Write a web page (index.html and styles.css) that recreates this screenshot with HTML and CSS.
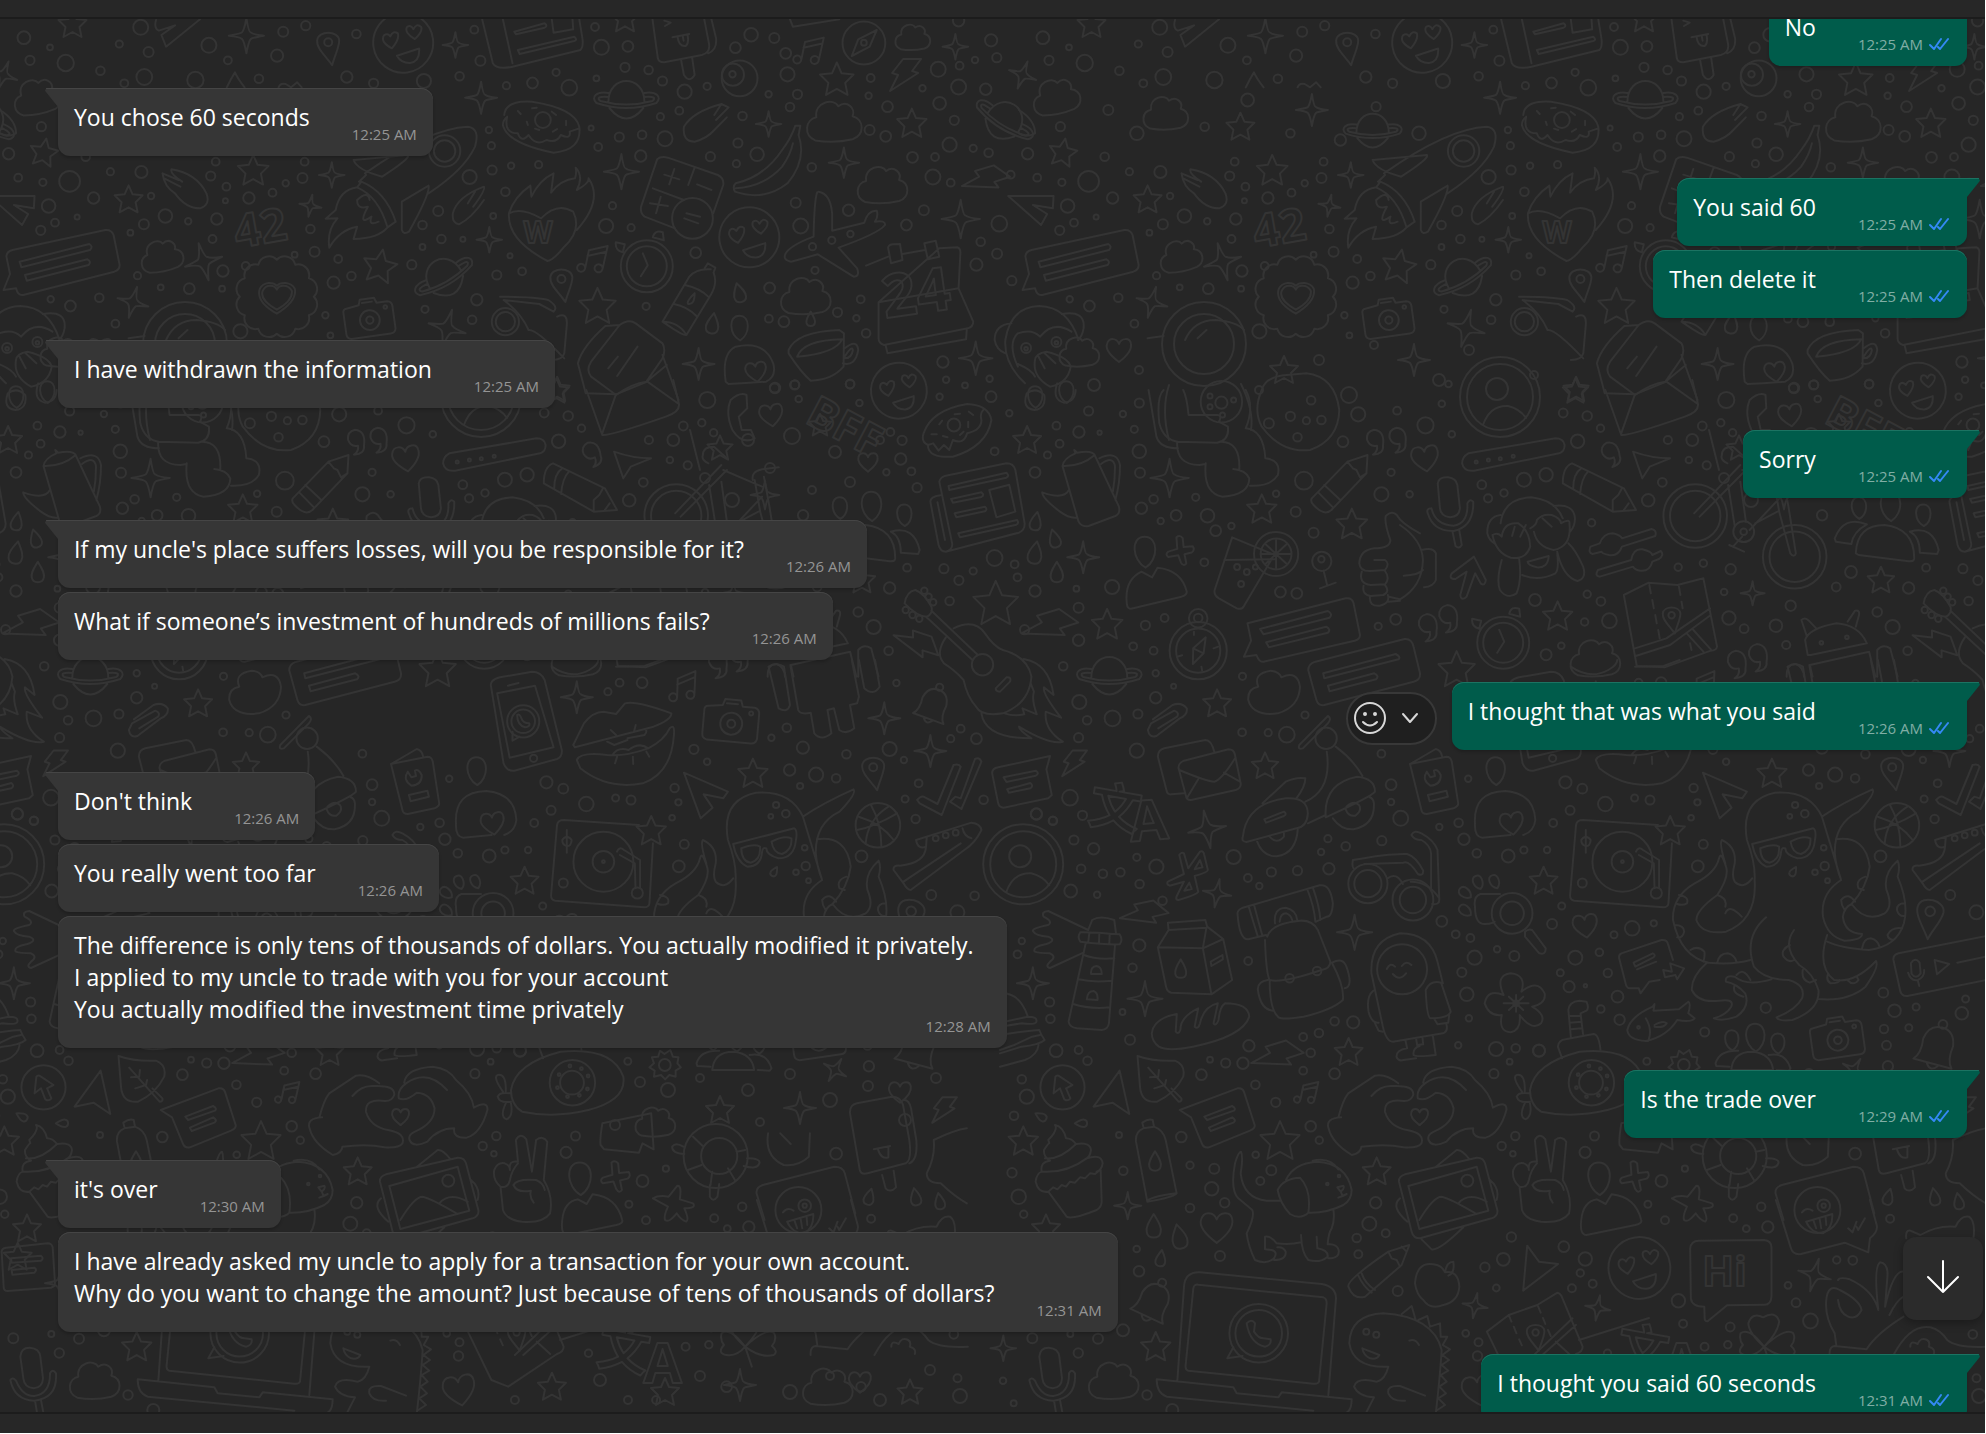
FILE: index.html
```html
<!DOCTYPE html>
<html lang="en">
<head>
    <meta charset="UTF-8">
    <meta name="viewport" content="width=device-width, initial-scale=1.0">
    <title>Chat</title>
    <link rel="stylesheet" href="styles.css">
</head>
<body>
    <svg class="defs" aria-hidden="true">
        <symbol id="ticks" viewBox="0 0 20 14">
            <path d="M1 8l4 4L12 2M9 10l2 2L19 2"/>
        </symbol>
    </svg>

    <div class="app">
        <header class="bar top"></header>

        <main class="chat">
            <svg class="wallpaper" id="wallpaper" aria-hidden="true"></svg>

            <ol class="messages">
                <li class="row out first">
                    <div class="bubble"><p>No</p><span class="time">12:25 AM<svg><use href="#ticks"/></svg></span></div>
                </li>
                <li class="row in first">
                    <div class="bubble"><p>You chose 60 seconds</p><span class="time">12:25 AM</span></div>
                </li>
                <li class="row out first">
                    <div class="bubble"><p>You said 60</p><span class="time">12:25 AM<svg><use href="#ticks"/></svg></span></div>
                </li>
                <li class="row out">
                    <div class="bubble"><p>Then delete it</p><span class="time">12:25 AM<svg><use href="#ticks"/></svg></span></div>
                </li>
                <li class="row in first">
                    <div class="bubble"><p>I have withdrawn the information</p><span class="time">12:25 AM</span></div>
                </li>
                <li class="row out first">
                    <div class="bubble"><p>Sorry</p><span class="time">12:25 AM<svg><use href="#ticks"/></svg></span></div>
                </li>
                <li class="row in first">
                    <div class="bubble"><p>If my uncle's place suffers losses, will you be responsible for it?</p><span class="time">12:26 AM</span></div>
                </li>
                <li class="row in">
                    <div class="bubble"><p>What if someone’s investment of hundreds of millions fails?</p><span class="time">12:26 AM</span></div>
                </li>
                <li class="row out first">
                    <div class="actions">
                        <button type="button" aria-label="React">
                            <svg width="34" height="34" viewBox="0 0 34 34"><circle cx="17" cy="17" r="15"/><path d="M10 21q7 7 14 0"/><circle class="eye" cx="12" cy="13" r="1"/><circle class="eye" cx="22" cy="13" r="1"/></svg>
                        </button>
                        <button type="button" aria-label="More">
                            <svg width="18" height="12" viewBox="0 0 18 12"><path d="M2 2l7 8 7-8"/></svg>
                        </button>
                    </div>
                    <div class="bubble"><p>I thought that was what you said</p><span class="time">12:26 AM<svg><use href="#ticks"/></svg></span></div>
                </li>
                <li class="row in first">
                    <div class="bubble"><p>Don't think</p><span class="time">12:26 AM</span></div>
                </li>
                <li class="row in">
                    <div class="bubble"><p>You really went too far</p><span class="time">12:26 AM</span></div>
                </li>
                <li class="row in">
                    <div class="bubble tucked"><p>The difference is only tens of thousands of dollars. You actually modified it privately.<br>I applied to my uncle to trade with you for your account<br>You actually modified the investment time privately</p><span class="time">12:28 AM</span></div>
                </li>
                <li class="row out first">
                    <div class="bubble"><p>Is the trade over</p><span class="time">12:29 AM<svg><use href="#ticks"/></svg></span></div>
                </li>
                <li class="row in first">
                    <div class="bubble"><p>it's over</p><span class="time">12:30 AM</span></div>
                </li>
                <li class="row in">
                    <div class="bubble"><p>I have already asked my uncle to apply for a transaction for your own account.<br>Why do you want to change the amount? Just because of tens of thousands of dollars?</p><span class="time">12:31 AM</span></div>
                </li>
                <li class="row out first">
                    <div class="bubble"><p>I thought you said 60 seconds</p><span class="time">12:31 AM<svg><use href="#ticks"/></svg></span></div>
                </li>
            </ol>

            <button type="button" class="to-bottom" aria-label="Scroll to bottom">
                <svg width="32" height="34" viewBox="0 0 32 34"><path d="M16 1v31M1 17l15 15 15-15"/></svg>
            </button>
        </main>

        <footer class="bar bottom"></footer>
    </div>

    <script src="doodles.js"></script>
</body>
</html>
```
FILE: styles.css
```css
* {
    box-sizing: border-box;
}

body {
    margin: 0;
    background: #fff;
    color: #fff;
    font-family: "Open Sans", "Noto Sans", sans-serif;
    font-size: 23px;
    line-height: 32px;
}

button {
    padding: 0;
    border: 0;
    background: none;
    color: inherit;
    cursor: pointer;
}

svg {
    fill: none;
    stroke: currentColor;
    stroke-width: 2px;
    stroke-linecap: round;
    stroke-linejoin: round;
}

.defs {
    display: none;
}

.app {
    display: flex;
    flex-direction: column;
    height: calc(100vh - 1px);
    margin-right: 1px;
    background: #262626;
}

.bar {
    flex: none;
    background: #272727;
}

.top {
    height: 19px;
    border-bottom: 2px solid #1c1c1c;
}

.bottom {
    height: 21px;
    border-top: 2px solid #1c1c1c;
}

.chat {
    position: relative;
    flex: 1;
    min-height: 0;
    overflow: hidden;
}

/* Background drawing, sits under the messages */
.wallpaper {
    position: absolute;
    inset: 0;
    width: 100%;
    height: 100%;
    color: #343434;
}

.wallpaper * {
    vector-effect: non-scaling-stroke;
}

.wallpaper text {
    font-family: "Open Sans", "Noto Sans CJK SC", sans-serif;
    font-weight: bold;
}

/* Messages */
.messages {
    position: relative;
    margin: -43px 0 0; /* list is scrolled a little */
    padding: 0 18px 0 58px;
    list-style: none;
}

.row {
    display: flex;
    align-items: center;
    margin-top: 4px;
}

.row.first {
    margin-top: 22px;
}

.row.out {
    justify-content: flex-end;
}

.messages .row:first-child {
    margin-top: 0;
    padding-top: 22px;
}

.bubble {
    position: relative;
    display: flex;
    align-items: flex-end;
    padding: 13px 16px 12px;
    border-radius: 12px;
    background: #363636;
    box-shadow: inset 0 1px #454545, 0 2px 3px rgba(0, 0, 0, .2);
}

.out .bubble {
    padding-right: 18px;
    background: #005c4b;
    box-shadow: inset 0 1px #1c7362, 0 2px 3px rgba(0, 0, 0, .2);
}

.bubble p {
    margin: 0;
    padding-bottom: 11px;
    white-space: nowrap;
}

.time {
    display: flex;
    align-items: center;
    gap: 6px;
    margin-left: 42px;
    color: #949494;
    font-size: 15px;
    line-height: 20px;
    white-space: nowrap;
}

/* Last line is short, so the time moves in under the long one */
.tucked .time {
    margin-left: -48px;
}

.out .time {
    color: #80aea5;
}

.time svg {
    width: 20px;
    height: 14px;
    color: #3489f5;
}

/* Tail on the first bubble of a group */
.first .bubble::before {
    content: "";
    position: absolute;
    top: 0;
    width: 13px;
    height: 19px;
    background: inherit;
    box-shadow: inset 0 1px #454545;
}

.in.first .bubble {
    border-top-left-radius: 0;
}

.in.first .bubble::before {
    right: 100%;
    clip-path: polygon(10% 0, 100% 0, 100% 100%, 0 14%);
}

.out.first .bubble {
    border-top-right-radius: 0;
}

.out.first .bubble::before {
    left: 100%;
    box-shadow: inset 0 1px #1c7362;
    clip-path: polygon(0 0, 90% 0, 100% 14%, 0 100%);
}

/* Hover actions */
.actions {
    display: flex;
    align-items: center;
    gap: 14px;
    height: 53px;
    margin-top: 4px;
    margin-right: 15px;
    padding: 0 16px 0 5px;
    border: 2px solid #383838;
    border-radius: 27px;
    background: #1f1f1f;
    color: #d8d8d8;
}

.actions button {
    display: flex;
}

.eye {
    fill: currentColor;
}

.to-bottom {
    position: absolute;
    right: 2px;
    bottom: 92px;
    display: flex;
    align-items: center;
    justify-content: center;
    width: 80px;
    height: 83px;
    padding-bottom: 4px;
    border-radius: 13px;
    background: #2b2b2b;
    box-shadow: 0 3px 10px rgba(0, 0, 0, .3);
}
```
FILE: doodles.js
```js
// Chat wallpaper. The drawing is 1019px wide and repeats to the right.
const TILE = 1019;
const TOP = 19;

// Small drawings used many times, centred on 0,0
const circle = (x, y, r) => `M${x - r} ${y}a${r} ${r} 0 1 0 ${2 * r} 0a${r} ${r} 0 1 0 ${-2 * r} 0`;

const shapes = {
    star: 'M0-14L4-5L14-4L7 3L9 13L0 8L-9 13L-7 3L-14-4L-4-5Z',
    spark: 'M0-16Q2-3 4-3Q6-1 16 0Q5 2 4 3Q2 5 0 16Q-2 5-4 3Q-6 1-16 0Q-5-2-4-3Q-2-5 0-16Z',
    cloud: 'M-17 17C-28 12-26-2-16-4C-18-18 0-22 4-14C12-20 20-12 17-5C28-2 28 12 17 16Q0 20-17 17Z',
    heart: 'M0 12C-8 6-14 0-12-6C-10-13-2-12 0-6C2-12 11-13 12-6C13 0 8 6 0 12Z',
    drop: 'M0-11C5-3 7 1 6 5C5 11-5 11-6 5C-7 1-5-3 0-11Z',
    egg: 'M0-15C14-15 14 8 1 16C-13 8-14-15 0-15Z',
    planet: 'M-18 3C-18-25 18-25 18 3M-17 9Q0 30 17 9M-18-6C-30-8-36-2-30 4Q0 14 30 4C36-2 30-8 18-6M-18-2Q-32-3-26 2Q0 9 26 2Q32-3 18-2',
    bolt: 'M-3-16L15-16L6-4L12-2L-16 16L-8 0L-14-2Z',
    pin: 'M4 17C-2 8-12 0-11-8C-10-18 10-18 11-8C11 0 6 8 4 17Z' + circle(0, -6, 4),
    note: 'M-7 10L-8-8L9-17L10 6M-8-2L9-11' + circle(-11, 11, 4) + circle(6, 7, 4),
    camera: 'M-24-14L-10-16L-8-22L8-22L10-16L22-16Q27-15 27-10L27 15Q26 20 21 20L-23 20Q-28 19-28 14L-28-10Q-28-14-24-14ZM-6-18H5' + circle(0, 2, 11) + circle(0, 2, 4) + circle(19, -10, 2),
    bell: 'M-18 16Q-12 10-14-4Q-12-18 0-18Q12-18 14-4Q12 10 18 16ZM-5 17Q0 24 5 17' + circle(0, -21, 4),
    love: circle(0, 0, 30) + 'M-12 4Q-23-4-18-10Q-14-12-12-8Q-8-14-4-10Q-3-4-12 4ZM12-2Q2-10 6-15Q10-17 12-12Q16-18 20-13Q21-8 12-2ZM-8 12L15 8Q14 21 4 21Q-5 20-8 12Z',
    quote: 'M8 4Q10-11-1-12Q-9-10-8-2Q-5 6 2 4Q3 10-2 13Q9 12 8 4Z',
    plus: 'M-4-15Q0-18 3-14L4-4L14-5Q17-1 13 2L5 4L7 14Q4 18 1 13L-2 5L-13 7Q-17 4-13 1L-3-2Z',
    user: circle(0, 0, 40) + circle(0, 0, 33) + circle(-3, -8, 11) + 'M-17 28Q-10 8 8 9Q20 12 26 21',
    clock: circle(0, 0, 26) + circle(0, 0, 20) + 'M-4-13L1-1L-6 10M-24-14Q-32-16-31-24L-22-22ZM6-29Q8-37 16-34L17-26Z',
    badge: scallop(12, 37) + 'M0 13C-10 7-17 1-14-6C-11-13-2-12 0-7C2-12 11-13 15-6C16 1 9 8 0 13ZM0 17C-14 9-20 1-17-8C-13-15-4-15 0-11C4-15 14-15 18-8C20 1 13 9 0 17Z'
};

function scallop(bumps, r) {
    let d = `M${r} 0`;
    for (let i = 1; i <= bumps; i++) {
        const a = i * 2 * Math.PI / bumps;
        d += `A11 11 0 0 1 ${(r * Math.cos(a)).toFixed(1)} ${(r * Math.sin(a)).toFixed(1)}`;
    }
    return d;
}

// Each sheet has its own origin and grid (x, y, sx, sy).
// rings: "x,y,r"   items: "shape,x,y,scale,rotation"   words: [text, x, y, size, rotation]
const sheets = [
    {
        x: 0, y: 0, sx: 2.8, sy: 3,
        rings: '67,113,18 140,142,8 84,181,13 184,189,23 281,212,12 334,132,10 394,82,21 416,156,14 404,231,22 348,250,11 547,240,23 585,136,21 638,181,11 793,95,14 776,167,17 856,77,13 725,236,12 998,102,12 971,231,16 1046,250,13 1187,243,20 1328,89,11 1345,182,14 1287,229,12 116,380,13 24,461,16 51,533,11 120,547,10 195,544,29 309,515,10 396,516,17 262,594,16 136,618,19 154,668,11 114,691,13 216,651,7 423,588,9 463,648,19 403,673,14 365,698,8 527,664,9 590,528,13 604,485,11 634,560,11 631,602,7 697,594,16 763,578,11 800,550,9 847,534,14 853,485,11 607,657,16 595,717,11 869,687,12 881,755,14 825,764,8 624,813,16 688,798,11 385,827,10 450,862,8 530,866,15 622,866,8 278,893,12 142,898,9 197,918,15 323,971,11 673,994,20 911,946,9 934,848,17 984,828,12 947,777,11 1153,794,13 1190,928,10 1322,959,12 1335,899,16 1391,825,13 1236,717,12 1296,718,7 1183,741,8 1183,675,12 1227,633,14 1315,531,20 1369,390,9 1376,437,10 1378,510,13 1381,648,8 925,1006,8 1245,453,30 1245,453,44 1415,965,38 1415,965,27 250,330,14 330,400,19 520,380,12 640,300,18 760,400,12 900,420,16 1000,320,13 1120,400,19 240,470,12',
        items: 'star,203,72,1 star,123,457,1,10 star,360,598,1 star,709,511,1.1 star,1064,798,1.2,10 spark,690,107,1.1 spark,1275,135,.8 spark,1347,293,1 spark,10,225,.9,20 spark,929,525,.8 spark,869,617,.7,10 spark,570,785,1.2,-15 spark,372,907,1,15 spark,1370,719,.8 spark,1252,985,1.2,15 cloud,103,290,.95,-10 cloud,452,768,.85,-10 cloud,410,340,.9 star,620,380,1 spark,820,330,1 planet,990,390,.9 love,1129,128,1,-8 pin,919,145,1 badge,775,890,1 camera,1035,955,.9,-8 planet,1243,830,1,-30',
        words: [['42', 664, 745, 46, -10]],
        paths: 'M18 770Q18 755 35 750L295 690Q312 688 318 705L335 795Q335 810 320 815L65 885Q50 888 45 865L10 870L28 822ZM55 785L250 732Q262 740 252 750L60 802ZM70 825L245 778Q257 785 248 795L75 842Z'
            + 'M1005 545L1025 525M1000 562L1012 545Q1080 575 1108 665L1085 682Q1060 590 1000 562M1022 520Q1200 385 1310 380Q1345 385 1330 440Q1300 510 1200 580'
            + 'M990 480L1142 465Q1150 475 1070 530Q1000 510 990 480M1125 605L1200 557Q1205 580 1145 695Q1130 705 1125 690Z'
            + 'M1000 562Q950 570 940 630L912 656L945 655Q915 690 922 743Q950 690 1000 680L990 717Q1060 715 1085 682M1000 600Q1030 570 1035 600M1000 600Q1000 630 1030 620Q1000 680 1040 650Q1030 680 1060 665'
            + 'M455 520Q460 560 490 580Q520 625 560 625Q590 615 578 580Q550 520 480 508Q475 520 510 545M455 520L500 540M460 535L505 560'
            + 'M1268 640Q1265 670 1285 673Q1320 655 1355 600M1268 640Q1280 590 1355 560Q1360 570 1325 620M1310 610L1330 575'
            + 'M437 60Q430 85 445 92L490 76L452 105L465 140L560 58'
            + 'M465 1020Q490 960 550 960Q610 965 630 990M500 1015L525 990M360 1015L405 1008M635 262Q645 240 658 217Q665 235 685 262M780 262Q785 248 800 252L815 262L832 247L845 262'
            + 'M0 330Q45 360 45 400Q20 415 0 400'
    },
    {
        // helmet, suit and the small things beside it
        x: 0, y: 0, sx: 1, sy: 1,
        rings: '185,344,42 185,344,30 300,360,5 330,395,8 240,390,4 420,380,6 450,350,5 515,375,4 75,385,6 120,370,4 355,345,4',
        items: 'star,265,370,1 spark,395,360,1 heart,100,350,1 cloud,60,352,.8 user,481,397,1',
        paths: 'M150 385Q142 410 150 440M222 384Q235 410 232 430'
    },
    {
        // fills around the bicycle, the turtle and the last row
        x: 0, y: 0, sx: 1, sy: 1,
        rings: '748,440,6 770,468,5 792,436,8 812,490,4 835,452,6 850,482,5 880,440,4 705,478,5 732,500,7 640,1082,5 668,1090,7 700,1078,4 748,1090,6 790,1074,5 830,1100,7 868,1086,5 905,1120,6 936,1078,5 615,1125,5 760,1122,4 600,1380,6 628,1400,4 700,1376,5 790,1392,7 830,1376,4 880,1400,6 930,1370,5 960,1396,7',
        items: 'star,720,448,.9 spark,765,495,.9 star,820,425,.8 heart,868,462,.8 cloud,655,1122,.8 star,720,1110,1 spark,800,1108,1 heart,900,1092,.9 bolt,945,1110,.8 star,665,1392,1 spark,740,1385,1 heart,860,1382,.9 star,910,1392,.9',
        paths: 'M560 1340L630 1318M690 430L700 470'
    },
    {
        x: 500, y: 0, sx: 2.8, sy: 3,
        rings: '266,81,11 284,142,21 358,139,15 350,202,13 416,210,12 455,243,13 270,235,8 194,263,22 157,217,10 91,249,15 18,257,10 517,275,20 580,259,10 659,143,15 703,104,19 768,114,14 800,160,15 805,223,20 752,283,9 833,283,13 812,321,12 679,348,12 502,332,11 449,350,10 398,404,12 334,411,13 462,416,21 255,384,7 275,441,11 394,468,16 315,617,10 297,678,20 367,683,10 589,470,13 666,429,13 720,463,19 662,491,10 873,502,12 828,608,14 842,678,21 976,631,16 1038,234,11 1032,287,9 1085,320,15 1035,390,14 1080,409,15 1155,472,15 1218,471,11 1183,265,9 1227,208,21 1287,197,11 1330,180,9 1375,121,17 1391,173,13 1284,62,16 1284,261,21 1360,268,16 1231,310,18 1272,361,13 1259,434,20 1325,445,10 1368,458,12 1430,524,11 1212,531,21 1262,548,11 1187,631,14 1138,675,15 1398,671,22 1346,725,12 1392,761,14 1334,794,17 1433,842,13 548,758,15 755,864,15 882,811,10 409,919,10 753,956,11 795,965,15 945,937,13 998,955,9 1010,898,11 1025,1000,12 769,1164,13 825,1155,13 980,1153,12 1240,1086,16 1249,1139,9 1302,1156,8 1371,1136,9 31,497,9 108,494,10 28,767,7 62,814,11 15,575,12 671,235,50 652,224,31 651,223,9 1019,129,60 1019,128,8 539,655,57 929,721,10 981,702,9 875,740,10 120,360,22 1473,1044,14 1558,1026,14 1473,1046,5 1558,1028,5',
        items: 'star,350,55,1 star,943,238,1.2 star,1153,370,1.05 star,273,918,1.3 star,160,1168,.9 spark,752,372,.8 spark,1275,140,.8 spark,340,515,1.1 spark,963,488,.95 spark,1290,657,1.2 spark,1332,1075,1.05 spark,556,1092,1 cloud,1155,112,.7 cloud,935,365,1.1 cloud,1070,555,1 cloud,855,888,1 note,870,155,1,15 note,265,780,1,15 bolt,1137,225,1 bolt,1362,545,1.1,35 planet,354,297,1 planet,1413,360,1,32 love,698,712,1,-8 love,1117,1172,.93,-8 clock,411,799,1 drop,670,880,.95,-15 drop,595,972,1,8 drop,870,958,.7 egg,670,983,.8 heart,717,1115,.85,-8 pin,172,855,1',
        words: [['W', 66, 730, 30, 0], ['24', 1078, 955, 60, -8]],
        paths: 'M25 640Q60 620 115 655Q160 605 205 635Q230 690 180 740Q150 780 133 783Q20 720 25 640Q40 590 85 557L88 590Q110 540 150 520L143 578Q170 540 210 535Q215 520 212 503Q235 530 215 570Q250 550 248 535Q290 600 215 690'
            + 'M12 345Q15 300 90 305Q210 325 222 380Q230 450 150 458Q20 430 8 375Q8 360 20 350Q10 400 50 400Q60 430 80 405Q100 440 130 420Q160 430 170 405Q200 420 195 395L222 385M50 333L58 342M90 325L103 323M145 335L157 345M185 362V376M75 365L78 375M148 395L160 387M98 386L110 390'
            + 'M-50 58L-20 190Q-10 210 35 200L225 150Q235 140 230 110L222 58M8 58L35 190M40 95L125 70Q135 78 125 83L45 103ZM50 150L208 110Q218 120 208 123L55 162ZM145 58L150 98L205 88L203 58'
            + 'M427 58L442 175Q445 188 460 187L565 165Q590 158 585 130L572 58M592 58L605 115Q608 150 583 160M507 180L515 225Q530 250 545 225L538 173M483 112L530 102M497 110Q500 140 520 138Q530 130 525 104M512 110L514 122M460 62L478 68L462 78M812 58L820 80L950 58'
            + 'M985 168L1003 118L1055 90L1035 140Z'
            + 'M515 380Q510 425 545 425Q580 415 600 390L635 352M515 380Q540 335 620 312L600 345M620 312L640 322L605 360'
            + 'M490 685L405 650Q392 640 395 620L440 478Q450 468 470 473L610 525Q628 535 625 555L597 640M545 503L527 555M428 565L515 600M460 524L502 538M488 507L474 553M420 610L470 618M450 590L437 640M552 553L592 570M522 640L560 650M516 655L555 670'
            + 'M827 377L841 377L836 405Q860 480 805 550Q740 605 658 575Q650 560 660 550Q740 530 790 450Q815 415 827 377M660 565Q740 560 790 500Q815 460 820 430'
            + 'M573 805L582 790L603 803L598 818Q610 850 590 885L522 1005Q515 1010 455 965L530 830Q550 805 590 808M518 855Q560 865 583 890M487 912Q525 920 550 948M455 965Q500 965 522 1005M545 880Q520 905 527 912Q545 915 545 880'
            + 'M892 575Q925 580 930 640L930 692L1020 668Q1030 630 1055 632Q1060 650 1050 665Q1080 660 1078 675Q1060 700 948 743L1000 805Q1008 830 990 830L890 763L815 785Q790 780 800 760Q815 735 878 710Q880 600 888 577'
            + 'M1025 797L1087 770M1127 762L1190 750M1230 745L1280 742Q1290 745 1289 760L1284 865L1325 965Q1325 980 1310 985L1075 1035Q1060 1030 1060 1015L1060 907ZM1060 907L1284 865M1080 1037L1085 1060L1305 1018L1307 988M1087 745Q1085 735 1100 733L1120 732L1127 780L1095 790ZM1188 730L1220 722L1230 770L1198 778Z'
            + 'M632 1145Q620 1060 660 1040Q740 1020 765 1090Q775 1130 745 1145Q690 1150 640 1152Z'
            + 'M808 1050Q830 995 950 990L963 1000L962 1100Q930 1140 870 1142Q845 1120 808 1060ZM832 1070Q850 1020 958 1018Q940 1060 832 1070M965 1045Q1000 1015 1003 1050Q995 1100 960 1090M965 1070Q985 1035 988 1050Q985 1075 965 1075'
            + 'M335 975L295 978Q230 1040 218 1090L240 1180M335 975Q360 955 380 970L455 1030Q465 1050 455 1075L410 1145Q370 1150 325 1185L255 1130Q240 1110 255 1085ZM410 1145L467 1095M455 1065L500 1200M303 1105L330 1070M328 1128L385 1040'
            + 'M0 890Q100 890 135 900Q165 920 150 935L110 912L10 900Q60 940 80 990Q100 985 180 1075M160 950Q190 935 187 975L180 1060Q175 1080 145 1080'
            + 'M1423 588L1550 588L1548 625L1492 615L1532 642L1515 675Z'
            + 'M1432 970Q1385 975 1385 1020Q1390 1050 1415 1060M1470 1150Q1410 1090 1415 1020Q1430 920 1510 918Q1590 920 1620 1020M1450 1100Q1420 1030 1450 1000Q1490 985 1512 1010Q1550 960 1600 995M1573 942Q1640 930 1634 985Q1630 1010 1618 1020M1498 1080Q1500 1060 1530 1055Q1590 1070 1598 1100Q1590 1150 1540 1160Q1490 1130 1498 1080M1450 1092Q1490 1110 1498 1130M1508 1070L1525 1105M1525 1060L1555 1090M1475 1180Q1460 1225 1497 1230Q1530 1225 1524 1185Q1500 1160 1475 1180M1560 1150Q1545 1200 1580 1208Q1610 1205 1612 1170'
    },
    {
        x: 860, y: 390, sx: 2.8, sy: 3,
        rings: '223,20,9 367,20,15 418,70,9 550,107,11 559,161,11 525,195,10 377,184,11 640,63,13 736,72,9 613,126,16 671,128,6 782,39,13 768,118,10 782,184,19 85,126,11 118,151,13 114,207,16 144,244,11 74,247,9 160,293,13 490,247,15 784,248,14 788,355,16 822,328,12 842,393,9 885,376,15 940,322,10 973,377,19 996,422,15 1040,408,9 1165,311,9 1220,365,14 1270,428,14 1395,73,20 1352,155,15 1504,62,11 1243,272,25 1460,313,20 1487,247,10 132,533,11 235,536,13 377,504,22 317,543,10 277,571,13 83,594,16 251,633,12 433,523,11 441,562,11 490,603,16 606,596,8 706,591,20 612,653,14 612,751,16 461,719,13 799,706,13 853,684,11 765,769,11 822,782,11 569,829,12 828,850,9 878,889,7 828,923,16 778,972,13 707,985,22 636,991,12 614,936,20 612,1043,13 775,1082,20 964,517,11 1177,606,15 1223,610,15 1071,859,10 1246,975,10 1070,1027,11 1143,1028,10 1195,1034,22 1500,688,15 1451,709,10 38,711,20 80,782,12 102,879,9 282,1016,11 254,1046,10 326,1046,15 83,1077,20 123,1110,9 263,105,18 1056,531,8 1083,546,8 1107,531,7 1067,582,8 1165,492,62 1165,492,43 1293,514,27 1292,508,9 947,782,80 947,782,62 947,685,26 947,684,12 343,824,30 180,602,9 192,620,9 205,637,9 128,660,9 147,675,9 166,686,9 1012,35,58 1012,38,17 980,50,7 1046,30,7 1015,75,7 980,18,7 1205,79,13 1263,31,12 1250,92,10 1225,142,12 1292,90,12 1145,100,14 1305,1045,30',
        items: 'star,468,150,1 star,380,640,1.6 star,692,703,1.1 star,1125,357,1.05 star,1377,402,1.1 star,1000,940,1 spark,867,264,1.2 spark,625,502,1 spark,68,985,1 spark,197,1083,1 quote,1442,155,1 quote,1505,149,1 egg,797,485,1 plus,896,482,.9 planet,698,855,1 bolt,533,715,1.3,35 bolt,157,767,1.1,70 bell,205,945,.9,20 drop,492,395,.9,10 drop,545,447,.9,-15 drop,490,490,1.1,10 drop,551,548,1 egg,490,20,.7 egg,577,5,.7',
        paths: 'M178 130Q200 60 300 42Q360 45 368 90Q355 170 260 200Q190 205 190 165Q170 155 178 130M190 165L205 160L220 182L235 165L250 180L260 150Q290 165 300 130Q340 120 340 90Q335 70 345 60M222 103L230 92M265 73L280 71M305 65L317 75M200 133H215M232 138L245 142M280 135L290 125M303 95V112'
            + 'M222 275Q225 262 240 257L410 220Q430 220 435 240L461 400Q462 420 445 428L240 485Q225 485 220 465L197 335Q197 320 225 316M222 275L258 460Q260 480 240 485M217 337L238 450M248 288L410 248Q420 258 410 263L250 300ZM255 327L340 307Q350 315 340 321L260 338ZM265 370L350 350Q358 358 350 364L270 382ZM275 430L440 390Q446 400 438 404L280 442ZM362 300L418 284L435 365L382 382Z'
            + 'M567 228Q570 205 603 190L600 180L608 188Q650 180 657 195L725 350Q730 370 715 378L640 408Q620 412 612 395ZM567 228Q620 230 657 195M585 300Q570 330 510 307Q510 325 560 365Q585 385 605 383M670 205Q720 180 728 225Q728 280 715 330M675 222Q710 195 714 230Q714 270 708 305'
            + 'M747 640Q740 570 788 545L818 562L833 533Q900 540 915 605Q915 615 900 620L765 655Q748 660 747 640'
            + 'M1042 442L1155 492M1020 510L1160 508M1042 442L993 600Q990 615 1005 625L1055 655Q1070 660 1075 648L1150 512M1165 450V535M1122 492H1207M1135 462L1195 522M1195 462L1135 522'
            + 'M1298 542L1308 585M1288 595L1332 578'
            + 'M1265 325L1365 215L1421 195L1418 250L1320 360Q1300 380 1270 345Q1260 335 1265 325M1365 215L1380 235L1390 240L1400 262L1418 250M1300 285L1345 330M1283 307L1322 350'
            + 'M1568 430Q1515 400 1503 375Q1490 360 1472 378Q1468 400 1485 450Q1485 475 1440 475Q1400 480 1398 520Q1400 545 1430 543L1470 540Q1485 520 1470 510L1440 510M1405 545Q1395 580 1430 585L1470 583Q1485 565 1470 543M1410 587Q1405 615 1430 618L1465 615Q1485 605 1470 585M1428 620Q1425 650 1455 647Q1485 640 1478 615M1480 635L1512 632'
            + 'M1085 700L1360 625Q1378 622 1382 640L1400 735Q1400 748 1385 752L1130 815Q1118 818 1110 795L1075 800L1095 752ZM1120 717L1310 663Q1325 672 1315 683L1130 733ZM1137 757L1305 710Q1320 718 1310 728L1145 772Z'
            + 'M1255 840Q1255 822 1275 815L1525 747Q1545 745 1550 770L1568 850Q1570 870 1550 875L1300 945Q1283 948 1278 930ZM1297 850L1500 792Q1515 800 1508 808L1300 865ZM1310 887L1440 850Q1455 858 1445 868L1315 904Z'
            + 'M1115 890Q1100 850 1150 842Q1175 845 1180 862Q1225 840 1232 890Q1230 950 1170 970Q1100 980 1087 930Q1085 895 1115 890'
            + 'M932 822L933 775L968 742L962 790ZM933 775L962 790M935 725V735M1003 770L990 775M888 800L902 796M958 842L956 830'
            + 'M820 988L875 945Q900 935 915 955Q918 975 895 985L830 1038Q810 1045 806 1020L815 1000L880 962Q895 968 888 980L835 1015'
            + 'M125 640Q130 605 155 600Q180 610 200 650Q205 670 188 680Q160 680 125 640M200 662L330 795M185 680L315 810M262 715Q320 685 350 730Q375 770 400 780Q470 800 480 860Q475 940 400 970Q340 980 325 950Q300 920 290 870Q265 840 235 820Q210 790 240 743M380 895L410 862Q425 860 420 875L392 905Q380 905 380 895'
            + 'M458 807Q530 820 542 915L515 892Q510 910 563 983L520 965Q515 1020 568 1055Q530 1065 445 1010Q445 1020 480 1045Q350 1045 340 970M405 970Q430 980 460 973L455 955L495 973Q480 930 487 905L478 880'
            + 'M808 0L830 140Q840 175 890 175M920 75Q915 20 905 0M850 0Q830 20 838 100Q850 150 890 155L1000 158Q1035 150 1030 110L1005 95Q1015 75 1000 75L920 75M888 155Q885 225 950 225L968 222M968 220Q960 310 1015 320Q1090 315 1090 265Q1080 240 1045 237M1062 237Q1065 155 1010 155M1080 0Q1105 50 1080 115Q1130 120 1135 205Q1180 210 1170 255Q1150 290 1092 287'
            + 'M1195 -45Q1135 -40 1125 0Q1100 60 1125 110Q1180 190 1260 180Q1340 150 1342 60Q1330 -40 1250 -50Z'
            + 'M1230 1065L1310 978Q1322 985 1310 1000L1240 1075Q1225 1080 1230 1065'
    },
    {
        x: 1400, y: 380, sx: 2.703, sy: 3,
        rings: '131,12,9 113,71,9 69,136,22 140,163,9 441,99,12 506,108,13 542,145,10 480,184,18 882,60,22 817,138,12 867,128,10 724,180,11 790,180,16 899,158,10 1065,24,14 1119,14,12 1129,57,9 1293,69,9 1268,12,12 781,240,9 829,256,11 709,307,12 395,284,18 335,299,19 221,314,12 238,355,11 281,339,10 26,343,9 671,361,17 518,428,10 752,562,10 820,550,10 894,568,14 1141,406,14 1219,576,16 1179,621,12 876,636,9 889,714,18 930,746,12 1016,737,17 1056,677,14 1290,696,13 1044,795,11 365,660,16 506,643,10 543,664,12 499,726,10 566,722,20 395,824,15 436,797,9 206,246,4 239,240,4 271,236,4 306,229,4 798,408,86 798,408,68 1067,530,86 1067,530,68 929,455,9 929,455,28 1139,788,5 1208,772,5',
        items: 'star,474,33,.9 star,426,708,1.05 star,1300,600,.95 star,153,868,1.3 spark,953,640,.75 heart,68,235,1.1,-8 heart,1055,105,.95,-8 quote,570,222,1,-15 quote,75,742,1.1 quote,130,715,1.1 quote,910,852,1.1 quote,967,832,1.1 clock,279,788,1 cloud,527,835,1 pin,734,720,.8 egg,1325,378,.95 egg,1240,383,.7 egg,1414,405,.7',
        words: [['BFF', 1142, 125, 44, 28]],
        paths: 'M555 30L598 165Q620 168 770 110Q810 95 805 70L790 0M555 40L635 43L598 160M635 43L720 5L805 72M975 150L967 110L990 85L988 45Q970 35 945 60Q930 100 950 150Q975 195 1010 175L1000 150L975 150'
            + 'M0 435Q60 480 62 540Q60 620 0 658L-30 650M10 587Q50 585 62 570M58 510Q90 500 97 520L97 600Q90 620 65 622'
            + 'M185 220L420 175Q442 175 445 195Q445 215 430 220L200 272Q172 275 168 250Q168 230 185 220'
            + 'M630 215Q680 235 730 235L675 260L655 295Z'
            + 'M465 250Q440 260 440 310L575 395L638 390L605 325ZM490 265Q468 280 468 328M508 275Q490 295 487 342M600 325L590 345L575 360L575 395M618 370L605 390'
            + 'M102 310Q105 290 130 292Q152 295 155 315L162 385Q160 410 135 412Q110 408 108 385ZM85 385Q70 385 75 400Q90 455 145 453Q200 440 198 365Q188 355 182 370Q185 430 145 437Q95 435 85 385M142 455L150 498Q160 508 167 495L160 450'
            + 'M272 430Q280 355 355 352Q420 360 440 415M272 405Q235 410 236 460Q240 480 255 490M415 378Q470 370 473 415Q473 440 460 455M250 465Q265 455 275 470Q280 425 320 430Q350 450 352 500Q340 540 300 533Q260 520 250 465M352 445Q370 435 370 420Q385 400 410 405Q435 415 435 430Q460 415 458 430Q465 500 415 510Q370 500 362 455M345 545L402 528Q400 565 370 562Q345 555 345 545M330 585Q375 605 420 580Q430 570 425 520M275 540Q260 600 270 630Q290 660 315 640Q330 600 322 535M425 515Q440 590 480 603Q505 595 495 560Q475 510 455 490M310 440L303 468M340 435L325 470M385 415L410 440'
            + 'M515 500L540 490Q550 460 575 460Q595 465 600 475L680 447Q695 450 690 468L600 500Q590 530 565 525Q545 520 545 515L520 522Q508 518 515 500M535 570L625 540Q630 505 655 508Q680 515 682 525L705 513Q715 525 700 537L682 545Q675 575 650 572Q635 570 630 560L540 590Q525 588 535 570'
            + 'M140 580L200 530L232 600Q230 620 218 610L203 580L180 650Q165 665 163 645L180 575L150 597Q130 597 140 580'
            + 'M795 400L920 255M810 410L935 270M870 225Q870 200 900 200L935 235M885 250Q865 240 870 225M887 315L905 440M920 305L935 425M945 450L1030 350M960 430L1020 395M1025 395L1055 520Q1065 535 1070 520L1050 380L1035 290M1025 395L1010 300M925 270L1030 320M925 470L900 500M890 495L930 515M1005 300Q1000 275 1030 268L1075 262'
            + 'M605 645L672 608L750 615L820 595L857 800Q855 812 840 812L715 862L640 858ZM635 805L720 775L838 685M637 828L730 795L840 705M775 760L820 815M793 750L840 808M674 615L678 640M682 660L686 685M690 705L694 730M698 750L702 775M754 620L758 645M761 665L764 685M784 790L788 810'
            + 'M1232 520Q1235 435 1310 435Q1390 445 1390 535Q1390 545 1375 544L1240 525ZM1262 433Q1200 405 1175 475L1178 485L1220 492Q1225 455 1262 433M1378 455Q1440 435 1456 510L1452 522L1405 518Q1405 470 1378 455'
            + 'M1102 825L1095 780Q1105 745 1180 730Q1240 735 1262 790L1110 825ZM1100 770L1085 720Q1095 710 1105 722L1125 745M1210 725L1230 692Q1245 690 1240 708L1232 740M1108 855L1268 815M1108 855L1115 890M1268 815L1285 890M1290 890L1290 810Q1305 790 1325 805L1345 890M1045 890Q1045 850 1070 852Q1090 860 1092 890'
    },
    {
        x: 500, y: 660, sx: 2.8, sy: 3,
        rings: '335,68,11 398,68,15 302,95,10 543,268,13 580,305,9 760,233,9 803,203,12 848,263,17 970,283,12 885,344,20 941,355,12 811,330,16 1172,370,11 1354,419,12 1502,462,15 1548,482,11 1329,707,12 130,367,17 65,184,45 65,184,33 94,295,10 1220,535,8 1248,526,8 1276,518,8',
        items: 'note,518,82,1,5 camera,648,185,1,5 star,708,340,1.05 pin,1045,340,1 spark,215,112,1 user,1465,613,1',
        paths: 'M-25 80Q-30 60 0 52L90 35Q115 35 125 60L173 270Q175 290 160 297L40 332Q20 335 10 310ZM-8 100L98 77L150 262L27 293ZM22 77L52 69M35 215L35 242L55 230M48 165Q55 160 60 175Q65 190 82 190Q85 200 70 202Q48 195 48 165'
            + 'M205 255L235 190Q260 155 290 155L325 162L350 130Q380 120 480 160Q480 180 430 200L210 262ZM215 300Q225 275 300 285Q350 290 415 265Q460 240 475 205Q490 190 487 225Q480 340 400 370Q300 390 225 325ZM310 210L325 225M380 195L375 215M300 245L320 255L357 240M357 235L405 225Q415 210 405 208M315 285Q330 260 360 270Q390 245 415 265M328 290L322 310M372 290L373 312M410 275L418 290'
            + 'M813 15L835 150Q840 165 870 158L880 220Q900 245 928 220L917 150L935 145L950 210Q970 225 992 205L980 135L1000 130L1005 110L985 0M752 20Q775 5 795 20L812 135Q805 160 780 145ZM1005 0L1020 85Q1045 110 1063 80L1050 0'
            + 'M1378 340Q1378 325 1395 322L1540 288L1530 328L1545 405L1535 415L1410 443Q1398 443 1395 430ZM1410 352L1500 332Q1512 340 1500 347L1418 366ZM1420 388L1485 369Q1495 378 1485 385L1425 398Z'
            + 'M1168 420Q1180 405 1190 412L1225 432L1270 315Q1285 310 1290 320L1237 465L1175 430ZM1260 425L1275 410L1290 415L1330 297Q1342 290 1348 305L1292 447Z'
            + 'M1165 540L1320 488Q1345 490 1348 510Q1330 550 1300 570L1150 690Q1140 690 1130 670L1102 630Q1100 615 1120 617Q1190 610 1193 560Q1170 570 1165 540M1130 665L1290 550M1295 505Q1300 530 1320 535M1193 560L1195 530'
            + 'M515 338L638 395L625 415L570 403L595 443L562 475Z'
            + 'M145 20Q200 60 250 30Q275 15 275 0M325 20L405 18L450 0'
    },
    {
        x: 1000, y: 740, sx: 2.8, sy: 3,
        rings: '102,222,16 148,242,12 196,173,22 231,226,13 207,300,13 262,326,16 227,386,12 288,401,12 337,397,12 383,352,10 391,432,12 438,380,20 198,453,18 272,464,9 455,482,12 390,616,17 371,683,12 343,816,8 364,899,14 139,786,13 141,836,12 157,932,18 220,930,11 245,962,12 61,603,9 49,643,11 61,1018,12 75,1070,20 654,351,20 694,414,11 726,438,9 760,396,13 833,392,13 899,336,9 918,296,10 968,319,12 921,386,16 1069,302,13 1095,134,15 1095,186,9 1122,235,21 1068,41,11 1230,261,9 1311,116,9 1299,298,16 1284,248,12 1335,340,12 1423,348,18 1467,330,10 1532,330,9 1549,249,11 1237,544,15 1276,583,11 1317,594,11 1329,653,20 1392,628,9 1440,648,14 1293,697,13 1307,763,19 1313,835,9 1283,916,9 1389,927,20 1444,925,12 1509,932,17 1427,965,8 1383,1001,13 1546,552,14 695,663,11 849,891,11 893,879,12 937,844,12 989,847,17 697,917,16 870,938,12 849,992,11 937,1001,15 680,970,16 632,969,13 588,959,8 564,1004,15 715,1034,12 772,1087,13 1030,431,55 1030,431,38 1156,480,57 1156,480,37 1434,520,57 1434,520,33 1126,688,70 175,1042,62 811,715,12 888,693,12 1445,790,8',
        items: 'star,742,77,.95 star,976,936,1 star,1522,422,1 spark,580,268,1.2,-10 spark,608,460,.9,10 spark,993,577,1.1 spark,406,776,1.1 spark,92,730,1 bolt,210,70,.8 bolt,405,528,1.1,40 bolt,778,955,1.2,35 drop,506,688,.9 egg,1387,92,.9 egg,1338,427,.45,-20 egg,1384,425,.45,-20 egg,1302,459,.45,-50 egg,1302,512,.45,-50 heart,1433,250,.95,-8 heart,1175,1130,.7 note,862,1060,.8,15 drop,115,1130,.6,-60 drop,228,1150,.6,-90',
        words: [['文', 242, 245, 52, 10], ['A', 366, 305, 56, -5]],
        paths: 'M515 160L480 163Q468 165 466 150L442 50Q442 30 460 25L575 0Q592 0 600 35M500 85Q498 70 515 62L640 28Q655 28 658 45L674 130Q675 145 660 150L535 180Q522 182 520 165ZM502 90Q580 125 600 125Q620 120 658 55M523 175L555 118M627 98L672 125'
            + 'M502 345Q508 335 515 340L527 385L560 335Q570 330 572 345L582 390Q582 397 545 408L555 455Q553 463 500 480Q490 480 495 468L515 425L475 437Q465 433 470 425L515 402ZM545 388L560 360L567 382ZM516 452L530 428L537 447Z'
            + 'M680 290Q690 190 800 175Q860 170 862 220Q860 260 830 265L690 306Q675 305 680 290M735 190L800 125Q830 110 855 115Q855 140 830 175M740 238L795 215Q805 222 795 228L745 248ZM912 232Q905 130 1000 110Q1050 115 1050 155Q1040 170 912 232M862 250L912 225M940 20Q990 60 1015 108M915 35Q930 150 855 185M720 305Q735 350 775 349Q830 340 834 265M932 235Q955 270 990 268Q1050 255 1047 190Q1045 175 1035 172M755 290Q775 315 795 290L795 280M968 208Q975 230 995 227Q1015 210 1005 195Q990 180 970 200'
            + 'M1148 72L1220 27Q1235 30 1238 50M1148 72L1250 50Q1262 50 1265 65L1283 190Q1283 200 1270 205L1195 222Q1182 222 1180 210ZM1198 165L1250 152L1254 170L1203 184ZM1195 95Q1180 120 1205 137Q1235 135 1234 105Q1225 85 1215 92L1218 108L1205 112Z'
            + 'M988 360Q985 380 990 385M988 360Q1090 340 1140 342Q1165 350 1185 392Q1185 410 1170 402Q1145 360 1130 368L1020 372M1085 415Q1110 395 1128 432M1152 285Q1160 268 1180 280Q1215 300 1225 330L1230 480Q1230 495 1210 492M1152 285Q1160 300 1180 300Q1205 315 1207 340L1207 450M1150 425Q1200 425 1230 475'
            + 'M1330 250Q1325 155 1415 153Q1495 160 1499 240Q1495 275 1465 285M1430 285L1350 293Q1328 290 1330 250'
            + 'M1400 462L1345 462Q1325 470 1330 500Q1330 555 1360 552Q1380 550 1385 545M1470 575Q1480 565 1490 570L1528 625Q1528 645 1510 640L1470 590Z'
            + 'M1410 765Q1385 705 1430 700Q1475 705 1460 755Q1505 715 1525 760Q1530 790 1490 800Q1530 825 1515 850Q1490 875 1455 825Q1460 870 1430 877Q1395 875 1405 825Q1370 830 1357 790Q1365 745 1410 765M1445 765V815M1410 790H1480M1425 770L1465 810M1465 770L1425 810'
            + 'M247 570L258 540Q280 525 320 540L325 582M225 577Q240 575 335 583Q345 600 335 613Q300 615 225 605Q215 590 225 577M250 580L247 608M278 583L277 610M307 585L306 612M240 610L192 845Q195 862 215 865L285 870Q302 868 305 850L322 615M235 645Q270 660 320 655M220 718Q260 728 313 722M205 792Q250 808 307 802M255 702Q253 680 270 678Q285 680 285 702ZM243 778Q245 753 262 753Q275 758 273 780ZM247 570L135 513Q115 515 122 530Q150 545 135 555Q90 565 92 573Q100 588 135 590Q160 600 130 612Q90 620 97 635Q110 640 140 640Q160 650 140 665Q125 680 140 684L235 637'
            + 'M470 548L575 540L580 560L625 597L650 720L592 763L480 758Q468 755 465 740L442 622L472 570L578 563M470 548L472 570M442 622L568 625L592 763M568 625L578 563M568 625L625 597M590 665L623 645L624 658L592 678Z'
            + 'M665 520Q665 510 680 503L895 436Q925 430 932 490Q930 530 915 530L885 545M665 520Q670 600 695 598L745 585M697 502Q710 550 722 590M712 497Q725 550 735 588M860 447Q880 500 883 545M876 443Q895 500 897 540M770 550Q765 505 800 503Q830 510 832 540M783 545Q785 520 802 520Q815 525 818 540M748 590Q760 550 840 542Q875 540 890 570L925 665Q925 685 900 690Q790 730 755 720Q745 700 742 600M755 720Q755 810 780 832Q790 840 850 830Q930 810 960 780Q965 740 930 670M750 720Q720 725 722 750Q730 810 765 812M930 668Q960 650 970 680Q990 740 965 745'
            + 'M1070 850L1040 700Q1035 600 1120 580Q1205 580 1225 665L1240 730M1192 750Q1205 720 1235 728L1262 815Q1255 835 1205 835Q1195 830 1192 750M1215 835L1225 853L1255 848L1258 825M1250 853Q1255 875 1240 880L1100 905Q1080 905 1070 850M1045 752Q1025 770 1032 815Q1040 850 1060 848M1050 850L1060 872L1072 875M1135 900L1140 925Q1110 930 1110 950Q1115 965 1130 960L1165 955M1165 895L1168 915L1185 913L1183 893M1175 918Q1155 925 1158 945Q1165 952 1220 945L1212 888M1083 687Q1093 665 1106 680M1125 678Q1138 660 1152 675M1100 702Q1118 725 1137 700'
            + 'M425 880Q430 835 495 822L492 875Q500 885 505 870Q505 830 555 805L545 860Q555 870 560 850Q570 800 610 790L598 850Q605 860 612 840Q615 800 630 790Q695 790 698 830Q680 890 540 920Q470 935 445 920Q425 905 425 880'
            + 'M-60 800Q-40 755 0 760Q55 755 78 830L0 848M78 830Q105 830 102 845Q100 855 60 850L0 860M0 885Q90 870 110 870Q115 885 125 900Q110 915 60 920L0 940M108 915Q105 945 70 960L0 980M0 930L40 915L60 905L90 890L112 885'
            + 'M150 1060L155 1010Q160 1003 168 1010L203 1035L185 1045L197 1075Q190 1085 180 1078L168 1045ZM335 992L362 1122L315 1088L262 1100Z'
            + 'M385 948Q430 965 490 962Q520 975 513 1010Q490 1060 440 1085Q395 1090 392 1040ZM415 983L500 1085Q510 1085 508 1075L480 1045M445 990L443 1010L420 1012M465 1020L462 1035L432 1045'
            + 'M503 1110L665 1045Q678 1042 683 1055L713 1155Q715 1165 700 1172L585 1222Q570 1225 565 1210L535 1132ZM572 1130L650 1098Q662 1105 655 1112L580 1140ZM585 1163L650 1132Q662 1140 655 1147L590 1173Z'
            + 'M920 1165Q910 1135 955 1132M948 1130Q960 1080 975 1060L1050 1007Q1080 1000 1115 1030M1040 1068Q1065 1035 1100 1038Q1160 1035 1157 1065Q1150 1085 1130 1083Q1075 1075 1078 1115Q1090 1160 1140 1170Q1190 1180 1180 1210Q1170 1225 1130 1222Q1080 1210 1012 1220Q1010 1240 985 1245Q930 1210 920 1165M1185 1028Q1190 985 1265 980Q1310 985 1330 1020Q1375 1060 1380 1103Q1420 1080 1418 1110Q1400 1180 1360 1193Q1320 1195 1325 1165Q1280 1165 1250 1205Q1210 1225 1200 1200Q1195 1185 1215 1175Q1270 1150 1270 1105Q1260 1060 1220 1058Q1190 1085 1170 1075Q1165 1050 1190 1030Q1250 985 1305 1050'
    },
    {
        x: 1440, y: 780, sx: 2.867, sy: 3,
        rings: '373,91,13 408,26,14 474,72,21 558,54,10 602,60,13 727,24,12 738,67,9 755,193,13 739,259,17 720,113,8 349,378,10 551,445,21 499,464,10 613,430,9 388,533,20 457,517,11 345,578,10 481,579,12 370,620,16 417,617,5 509,650,17 461,687,11 515,719,15 593,844,10 759,756,13 934,683,15 1263,229,17 1271,638,14 1303,692,18 1365,681,10 1273,747,12 1280,796,13 1344,743,10 1284,859,15 1463,345,14 1538,397,20 1418,117,12 1388,57,10 1507,657,10 1496,700,18 1087,18,9 284,812,17 443,1068,13 416,1117,16 216,1068,12 177,1098,12 209,1121,8 702,1166,9 635,1203,17 596,1273,10 921,1280,12 1190,1121,17 1103,258,12 1075,277,8 1111,302,7 1100,203,8 1018,75,9 1046,101,11 1003,109,7 523,245,86 523,245,31 523,245,4 620,339,16 408,309,13 1310,136,64 434,908,65 433,908,34 427,858,4 460,866,4 479,888,4 477,927,4 454,946,4 420,950,4 391,923,4 396,884,4 569,742,4 699,855,17 845,1128,92 855,1128,52 1082,1290,66 1100,1277,18 1100,1277,6',
        items: 'star,660,152,1.05 heart,417,437,1,-8 pin,1400,415,1.2,15 camera,1140,775,.95,-8 bell,1425,800,1.1,15 egg,836,780,.65 egg,903,772,.9 egg,968,790,.65 egg,455,1195,1.05 plus,557,1190,.95 drop,1013,275,.5,30 drop,1285,1252,.8,15 drop,1418,1252,.85,-10 drop,1487,1265,.8,-10 spark,1187,870,.8,30',
        paths: 'M390 135Q392 120 410 120L625 135M665 190L655 370Q653 382 640 382L385 362Q372 360 373 345L390 135M562 215Q568 198 582 210L628 240L628 325M615 325L613 250L570 225M418 150V218M405 180Q418 160 432 180Q430 200 418 198Q405 195 405 180'
            + 'M902 300Q905 250 880 180Q860 60 960 38Q1060 30 1095 110L1150 300M895 192L1070 145Q1080 150 1075 180Q1070 235 1025 235Q990 225 990 205Q980 200 978 215Q975 260 935 260Q905 245 895 192M918 205Q920 245 945 248Q975 240 972 200Q955 190 918 205M1005 185Q1010 220 1035 222Q1065 210 1062 175Q1040 165 1005 185'
            + 'M902 300Q910 420 820 455Q750 465 735 420Q735 390 795 345Q830 290 820 260Q805 210 800 235Q790 280 730 310Q665 350 668 420Q690 530 770 548Q840 555 890 540M808 180Q850 200 845 250Q835 290 845 305Q870 330 895 295M808 180Q800 190 818 250'
            + 'M1095 110Q1150 70 1240 28Q1250 40 1200 95Q1130 130 1132 220Q1135 260 1150 300M1135 178Q1220 165 1232 260Q1225 320 1180 372Q1220 430 1275 400Q1300 380 1280 330Q1270 280 1312 242Q1320 260 1312 290Q1345 370 1330 430Q1310 500 1230 510Q1150 505 1110 485'
            + 'M1150 300Q1090 340 1098 410Q1110 470 1160 482Q1210 480 1210 462Q1160 460 1155 410Q1160 380 1180 372M1110 465Q1080 560 1130 600Q1190 610 1250 543Q1260 560 1220 620Q1170 665 1085 657'
            + 'M935 412Q870 470 900 560Q930 600 1000 600Q1050 615 1038 655Q1020 690 965 712Q970 725 1010 720Q1090 690 1085 630Q1070 580 1030 555Q980 500 1015 450M765 548Q720 590 722 630Q740 670 800 662Q845 655 835 680Q820 705 785 715Q810 725 850 710Q890 680 875 640Q850 610 820 605Q815 585 845 590Q880 620 950 598'
            + 'M685 345Q715 350 708 370Q695 378 680 372M672 435Q700 435 700 455Q695 475 680 472M718 510Q740 495 758 515Q760 530 755 545M795 548Q800 520 825 520Q845 525 850 545M818 400Q830 370 865 410M795 345Q825 355 818 380M1003 495Q975 510 985 530Q1000 550 1015 540M1220 290Q1190 300 1200 325L1215 330M1190 365Q1170 335 1150 360Q1150 375 1160 390M1210 505Q1215 475 1235 475Q1255 480 1260 500M1325 445Q1295 440 1283 465Q1285 478 1300 480M1332 370Q1310 370 1310 390Q1315 410 1332 408M1113 580Q1105 600 1120 610Q1145 610 1145 600M1168 600Q1185 620 1200 600L1195 590M1040 570Q1035 600 1060 608L1078 600M850 585Q870 560 890 600M845 615Q835 640 870 650'
            + 'M1255 110Q1320 130 1355 180M1290 75Q1320 130 1320 200M1250 150Q1300 140 1365 100M1340 80Q1280 120 1275 190'
            + 'M1565 468L1315 520Q1298 525 1300 540L1320 635Q1325 650 1340 648L1565 600M1350 550Q1362 530 1375 548L1378 580Q1365 600 1352 582ZM1342 578Q1350 605 1370 600Q1390 590 1388 570M1370 602L1374 618M1418 540L1460 552L1425 583ZM1483 548L1565 530'
            + 'M668 540L653 490Q650 478 635 480L520 520Q510 525 515 540L532 610Q535 625 545 625L570 625L575 640L600 605L630 600M555 548L610 520Q620 525 612 532L560 560ZM565 568L620 545M640 570L665 575L660 550L700 565L680 598L675 585L645 592Z'
            + 'M537 750Q545 710 610 680L615 672L612 692Q650 690 685 688L712 665Q720 670 712 700L730 715Q720 728 680 720Q650 770 590 783Q540 780 537 750M590 715Q610 750 597 783M615 740Q640 745 650 730Q640 720 615 735'
            + 'M258 930Q270 850 400 815Q550 800 580 890Q590 960 480 990Q380 1015 290 995Q258 975 258 930M350 835L338 800Q340 780 360 778L440 762Q455 762 460 808M375 770L368 690Q370 665 400 662L420 665Q428 685 420 692L403 700L410 762M370 708H403M372 728L405 725M375 748L406 745M235 935Q205 890 220 885Q245 880 243 935M220 950Q225 935 255 940M220 950Q225 970 258 965M243 970Q225 1010 245 1018Q265 1010 258 970'
            + 'M680 830L685 812L698 822L715 810L722 830L738 832L735 850L745 862L730 872L730 890L712 885L700 898L688 885L668 890L670 872L655 862L668 850L662 832Z'
            + 'M835 870Q840 815 895 815Q950 820 955 870L835 870M855 812Q800 810 790 850L792 858L830 860M942 825Q990 815 1005 865L1000 872L965 870'
            + 'M235 1290L228 1220Q205 1200 210 1170Q220 1145 240 1150Q255 1155 255 1170Q250 1140 278 1145L272 1080Q285 1055 302 1078L318 1175L330 1080Q350 1065 362 1085L352 1200Q380 1250 370 1300M228 1220Q250 1225 255 1200Q260 1170 278 1150M265 1215Q275 1195 330 1200Q352 1210 355 1230M265 1215Q275 1240 315 1232Q310 1250 323 1268M370 1300Q350 1330 290 1325Q245 1320 235 1290'
            + 'M405 1320Q410 1265 450 1258L475 1272L492 1243Q560 1250 577 1320Q580 1330 560 1335L420 1365Q400 1365 405 1320'
            + 'M752 1100Q730 1085 720 1100Q720 1120 755 1122M935 1135Q975 1135 970 1150Q965 1170 925 1158M828 1215L828 1250Q838 1268 850 1250L855 1212M780 1070L810 1100M765 1170L805 1155M830 1215L835 1175M900 1200L880 1165M930 1110L905 1115'
            + 'M515 1095Q512 1080 520 1030L660 1000L667 1108L635 1090L625 1118L525 1108ZM995 1060Q985 1130 1040 1155Q1080 1160 1112 1130L1115 1060M1030 1060L1060 1092'
            + 'M665 1255Q680 1245 710 1250L735 1217Q748 1215 742 1258L780 1270Q790 1285 755 1285Q770 1320 760 1325Q745 1320 733 1300Q710 1330 700 1320Q695 1310 708 1280Z'
            + 'M1230 1000Q1228 975 1250 970L1350 950Q1375 950 1382 975L1400 1080M1230 1000L1258 1170Q1262 1185 1280 1180L1390 1150Q1408 1140 1400 1080M1385 960Q1400 960 1405 985L1420 1080Q1425 1140 1400 1150M1322 1185L1332 1225Q1345 1240 1362 1222L1355 1172M1298 1108L1345 1098M1310 1108Q1320 1140 1340 1132L1340 1102'
            + 'M985 1320L962 1240Q960 1222 980 1215L1185 1160Q1210 1160 1215 1180L1245 1300M1038 1297Q1050 1280 1068 1292'
            + 'M1565 1045Q1530 1050 1470 1080Q1475 1130 1450 1180Q1450 1210 1490 1210Q1530 1250 1565 1270'
    },
    {
        x: 1000, y: 1110, sx: 3, sy: 3,
        rings: '42,17,13 357,75,9 544,81,16 570,166,11 643,176,15 635,236,20 674,278,14 570,294,13 370,182,13 36,188,14 56,260,22 71,313,11 410,417,10 417,484,16 660,438,15 767,134,10 814,181,15 781,213,12 932,49,16 958,91,11 1127,278,17 1108,341,21 1157,370,12 1070,384,13 1075,433,12 1193,543,15 97,685,15 211,672,9 294,686,15 369,661,18 235,729,14 9,812,10 41,880,9 441,855,14 517,900,18 776,670,70 776,670,88 982,222,4 1017,198,4 1099,665,9 1129,674,9 1402,212,18',
        items: 'star,70,93,1.05 star,840,92,1.4 star,1130,184,1 star,467,710,1.05 star,138,355,1 spark,383,287,.85 spark,10,715,.8 drop,461,350,1.15 drop,538,382,1.2,-12 drop,482,446,.8,8 drop,465,155,.95 heart,650,352,1.3 bell,460,575,1,25 cloud,340,812,1 star,110,440,1 spark,240,520,1',
        paths: 'M145 90Q175 60 165 45Q190 50 198 85Q215 85 228 102Q270 95 273 120Q270 140 260 145Q305 130 308 160Q305 180 290 185M145 245Q115 250 107 215Q110 190 125 185Q120 155 150 152Q130 140 132 120Q145 100 148 100L145 90M135 145Q180 150 228 102M125 185Q200 190 260 145M145 245L200 320Q215 330 290 300Q305 290 305 275L302 180M148 242L160 232L172 238L185 225L198 230L210 215L225 218L240 202L255 205L270 190L285 192L300 180'
            + 'M430 50L427 38Q445 25 458 30L462 50Q490 60 497 90L530 250Q520 262 442 275L408 95Q405 65 430 55L462 50M442 275Q440 262 528 250'
            + 'M723 125Q715 125 705 160Q690 240 715 265L757 300Q765 320 740 370Q745 410 765 450Q800 465 822 445Q835 425 815 420L795 418L795 380Q810 375 830 400Q870 405 903 397M723 125Q730 140 722 190Q730 265 800 272L840 272M822 450Q860 450 857 425Q850 410 832 412M903 375Q905 430 925 450Q960 460 983 440Q985 420 952 415L950 380M985 445Q1020 445 1016 420Q1010 400 983 403Q985 370 995 355Q1005 330 1000 298M858 210Q880 160 950 155Q1040 160 1055 240Q1055 270 1030 285Q980 310 925 308M938 152Q990 140 1015 178M833 240Q850 205 900 203Q935 240 925 308Q900 330 870 312Q840 280 833 240M1012 232L1030 227Q1035 235 1022 245ZM1022 245L1028 258L1015 263M1028 258L1040 252'
            + 'M1197 215Q1195 200 1215 193L1430 143Q1450 142 1455 160L1492 300Q1495 318 1475 325L1260 385Q1240 385 1235 365ZM1225 228L1430 170L1465 302L1258 357ZM1258 330Q1300 260 1325 260Q1350 265 1430 312M1375 280Q1405 245 1460 275M1308 170L1370 120Q1385 118 1408 147M1265 388L1295 418Q1315 425 1390 352M1200 265Q1170 290 1222 335M1470 210Q1500 235 1490 270'
            + 'M1045 530Q1040 510 1165 425L1228 405L1205 465L1095 560Q1060 570 1045 530M1165 425L1175 445L1190 450L1200 470M1085 490Q1095 520 1125 540M1075 497Q1090 530 1115 548M1205 410L1220 425'
            + 'M1300 463Q1250 455 1245 520Q1250 555 1270 570Q1290 600 1330 585Q1375 575 1378 530Q1375 480 1335 487Q1325 465 1300 463M1335 487Q1340 455 1360 455Q1365 490 1345 497'
            + 'M532 812L552 530Q555 485 600 487L965 522Q1008 530 1008 565L985 855M580 535Q582 522 595 524L970 562Q980 565 980 580L957 815Q953 823 940 821L565 782Q555 780 557 765ZM470 808L700 832L710 850L835 862L845 847L1055 868Q1055 900 1040 908M470 808Q470 850 500 860L940 902M700 712L682 745L728 738M740 640Q755 625 765 640L762 665Q775 685 790 685L812 688Q815 705 795 710Q750 700 740 640'
            + 'M1165 770Q1060 775 1048 700Q1050 615 1150 610Q1300 620 1325 720Q1320 800 1308 905M1165 770Q1155 810 1130 815Q1070 800 1062 830Q1075 860 1122 862L1100 905M1165 850Q1160 825 1200 828L1275 857M1165 850Q1175 875 1215 872M1087 715L1138 735Q1130 750 1110 745Q1090 735 1087 715M1228 692Q1245 685 1257 705M1205 612L1235 588L1247 630M1255 630L1282 618L1290 650L1320 640L1322 680L1342 680L1328 705L1350 718L1327 735L1347 750L1325 765L1345 782L1322 795L1340 815L1318 830L1338 850L1315 865L1335 885L1312 900'
            + 'M118 740Q120 712 147 713Q175 715 178 740L186 805Q185 833 158 835Q130 832 127 805ZM88 810Q95 800 105 812Q125 860 160 858Q208 850 207 790Q215 775 225 790Q230 865 160 872Q100 870 88 810M162 872L168 908M180 870L187 908'
            // note card
            + 'M62 425Q62 415 75 413L200 400Q212 400 215 412L222 520Q222 530 210 533L80 543Q68 543 68 530ZM90 445L180 437Q190 445 180 452L92 458ZM92 480L160 473Q170 480 160 488L94 494Z'
    },
    {
        x: 1460, y: 1200, sx: 2.976, sy: 3,
        rings: '153,111,14 74,202,14 129,178,19 309,140,16 373,177,20 108,264,10 333,265,12 358,219,11 395,251,12 610,61,12 650,302,20 664,371,12 728,440,12 797,434,11 804,381,13 1000,308,13 976,256,10 1121,180,11 1169,181,13 813,55,12 852,86,10 916,81,17 1043,363,22 1280,56,12 17,400,10 55,427,12 52,468,14 439,460,11 1526,403,13 1537,535,12 640,600,12 850,560,16 220,600,12 1250,560,14',
        items: 'spark,45,317,.8,10 spark,410,324,.8,10 spark,1055,225,1.05,15 love,534,204,1.03,-8 heart,55,570,1.3,-10 pin,225,412,.8 star,330,560,1 cloud,1150,560,1',
        words: [['Hi', 720, 258, 42, 0], ['文', 458, 490, 52, 10], ['A', 602, 550, 56, 0]],
        paths: 'M940 0L985 145Q990 165 1015 162L1145 128L1215 157L1220 115Q1245 95 1240 75L1220 0M1030 65L1108 42Q1110 85 1080 100Q1045 100 1030 65M1052 62L1060 85M1070 55L1075 85M1088 50L1090 75M1155 85L1168 97L1180 65M1180 80L1185 90L1205 55'
            + 'M685 145Q688 122 710 122L905 120Q928 122 927 145L927 290Q925 315 905 314L795 316L737 364Q727 365 728 350L727 320Q690 320 687 295Z'
            + 'M200 137L235 185L292 192L188 272Z'
            + 'M80 395L145 345L230 315L290 278Q300 280 305 295L365 440Q365 455 345 462L200 560L150 540ZM220 465L335 355M245 465L345 375M285 425L325 462M145 345L153 365M160 380L168 400M176 418L184 436M232 318L240 338M247 354L254 372M262 390L270 408'
            + 'M905 440Q860 400 858 370Q870 335 902 352Q940 330 950 365Q945 400 905 440Q860 380 835 400Q830 420 842 435Q820 460 850 465Q880 470 905 440Q970 380 992 400Q1000 420 985 438Q1005 455 990 465Q950 475 905 440L925 500'
            + 'M1120 437L1115 400Q1085 350 1090 300Q1095 250 1130 270Q1190 300 1195 330Q1180 360 1155 350Q1130 340 1125 300M1125 240Q1130 230 1160 238Q1230 270 1245 330Q1230 200 1250 187Q1275 190 1272 230L1265 320M1278 345Q1300 300 1320 290M1320 215Q1290 210 1265 320M1100 465Q1098 440 1115 438L1210 448Q1240 400 1320 350M1290 465Q1340 370 1400 382Q1430 390 1450 420Q1480 445 1568 440M1340 440Q1340 420 1362 432Q1370 410 1390 420Q1400 425 1395 440Q1415 445 1410 462M1328 115Q1325 90 1340 92L1370 105Q1420 75 1475 80Q1490 45 1515 50Q1535 65 1528 115'
    }
];

function drawSheet(s) {
    const px = x => (s.x + x / s.sx).toFixed(1);
    const py = y => (s.y + y / s.sy).toFixed(1);
    let out = '';

    for (const ring of s.rings.split(' ')) {
        const [x, y, r] = ring.split(',').map(Number);
        out += `<circle cx="${px(x)}" cy="${py(y)}" r="${(r / s.sx).toFixed(1)}"/>`;
    }
    for (const item of s.items.split(' ')) {
        const [name, x, y, scale, turn = 0] = item.split(',');
        out += `<path transform="translate(${px(x)} ${py(y)}) rotate(${turn}) scale(${scale})" d="${shapes[name]}"/>`;
    }
    for (const [word, x, y, size, turn] of s.words || []) {
        out += `<text transform="translate(${px(x)} ${py(y)}) rotate(${turn})" font-size="${size}">${word}</text>`;
    }
    out += `<path transform="translate(${s.x} ${s.y}) scale(${1 / s.sx} ${1 / s.sy})" d="${s.paths}"/>`;
    return out;
}

document.getElementById('wallpaper').innerHTML =
    `<g id="tile" transform="translate(0 ${-TOP})">${sheets.map(drawSheet).join('')}</g>`
    + [-1, 1, 2].map(n => `<use href="#tile" x="${n * TILE}"/>`).join('');
```
